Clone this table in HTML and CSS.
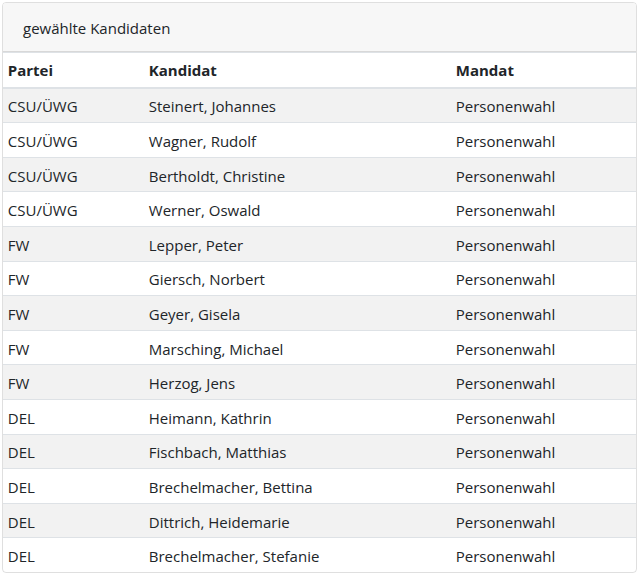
FILE: index.html
```html
<!DOCTYPE html>
<html lang="de">
<head>
<meta charset="utf-8">
<title>gewählte Kandidaten</title>
<link rel="stylesheet" href="styles.css">
</head>
<body>
<div class="card">
  <div class="card-header">gewählte Kandidaten</div>
  <table class="table">
    <thead>
      <tr><th class="c1">Partei</th><th class="c2">Kandidat</th><th class="c3">Mandat</th></tr>
    </thead>
    <tbody>
      <tr><td>CSU/ÜWG</td><td>Steinert, Johannes</td><td>Personenwahl</td></tr>
      <tr><td>CSU/ÜWG</td><td>Wagner, Rudolf</td><td>Personenwahl</td></tr>
      <tr><td>CSU/ÜWG</td><td>Bertholdt, Christine</td><td>Personenwahl</td></tr>
      <tr><td>CSU/ÜWG</td><td>Werner, Oswald</td><td>Personenwahl</td></tr>
      <tr><td>FW</td><td>Lepper, Peter</td><td>Personenwahl</td></tr>
      <tr><td>FW</td><td>Giersch, Norbert</td><td>Personenwahl</td></tr>
      <tr><td>FW</td><td>Geyer, Gisela</td><td>Personenwahl</td></tr>
      <tr><td>FW</td><td>Marsching, Michael</td><td>Personenwahl</td></tr>
      <tr><td>FW</td><td>Herzog, Jens</td><td>Personenwahl</td></tr>
      <tr><td>DEL</td><td>Heimann, Kathrin</td><td>Personenwahl</td></tr>
      <tr><td>DEL</td><td>Fischbach, Matthias</td><td>Personenwahl</td></tr>
      <tr><td>DEL</td><td>Brechelmacher, Bettina</td><td>Personenwahl</td></tr>
      <tr><td>DEL</td><td>Dittrich, Heidemarie</td><td>Personenwahl</td></tr>
      <tr><td>DEL</td><td>Brechelmacher, Stefanie</td><td>Personenwahl</td></tr>
    </tbody>
  </table>
</div>
</body>
</html>
```

FILE: styles.css
```css
html, body {
  margin: 0;
  padding: 0;
  background: #fff;
}
body {
  padding: 2px;
  font-family: "Open Sans", "Noto Sans", "Liberation Sans", sans-serif;
  font-size: 15px;
  line-height: 24px;
  color: #212529;
}
.card {
  border: 1px solid rgba(0, 0, 0, 0.125);
  border-radius: 4px;
  overflow: hidden;
  width: 633px;
}
.card-header {
  background: #f7f7f7;
  padding: 13px 20px 11px;
  border-bottom: 1px solid rgba(0, 0, 0, 0.125);
}
.table {
  width: 100%;
  border-collapse: collapse;
  table-layout: fixed;
}
.table th,
.table td {
  padding: 5.8px 4.8px 3.8px;
  text-align: left;
  vertical-align: top;
  border-top: 1px solid #dee2e6;
}
.table th {
  font-weight: 700;
  padding-top: 4.8px;
  padding-bottom: 4.8px;
  border-bottom: 2px solid #dee2e6;
}
.c1 { width: 131.4px; }
.c2 { width: 297.4px; }
.table tbody tr:nth-child(odd) {
  background: #f2f2f2;
}
```
